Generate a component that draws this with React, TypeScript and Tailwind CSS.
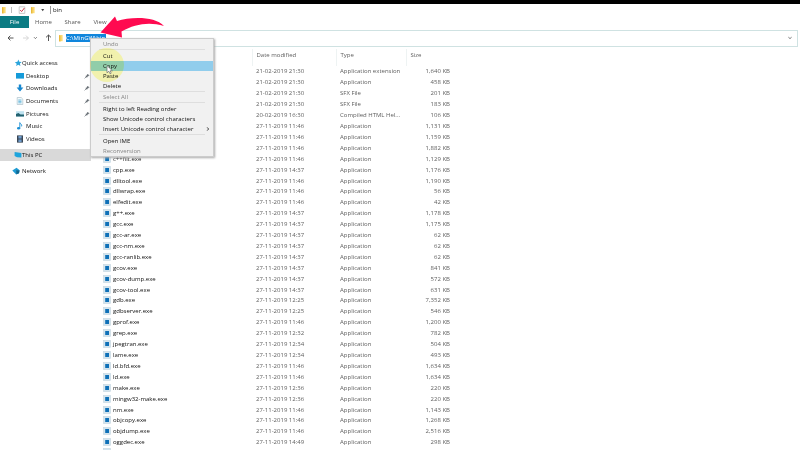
import React from "react";

type FileRow = [name: string, date: string, type: string, size: string];

const files: FileRow[] = [
  ["", "21-02-2019 21:30", "Application extension", "1,640 KB"],
  ["", "21-02-2019 21:30", "Application", "458 KB"],
  ["", "21-02-2019 21:30", "SFX File", "201 KB"],
  ["", "21-02-2019 21:30", "SFX File", "183 KB"],
  ["", "20-02-2019 16:30", "Compiled HTML Hel...", "106 KB"],
  ["", "27-11-2019 11:46", "Application", "1,131 KB"],
  ["", "27-11-2019 11:46", "Application", "1,159 KB"],
  ["", "27-11-2019 11:46", "Application", "1,882 KB"],
  ["c++filt.exe", "27-11-2019 11:46", "Application", "1,129 KB"],
  ["cpp.exe", "27-11-2019 14:37", "Application", "1,176 KB"],
  ["dlltool.exe", "27-11-2019 11:46", "Application", "1,190 KB"],
  ["dllwrap.exe", "27-11-2019 11:46", "Application", "56 KB"],
  ["elfedit.exe", "27-11-2019 11:46", "Application", "42 KB"],
  ["g++.exe", "27-11-2019 14:37", "Application", "1,178 KB"],
  ["gcc.exe", "27-11-2019 14:37", "Application", "1,175 KB"],
  ["gcc-ar.exe", "27-11-2019 14:37", "Application", "62 KB"],
  ["gcc-nm.exe", "27-11-2019 14:37", "Application", "62 KB"],
  ["gcc-ranlib.exe", "27-11-2019 14:37", "Application", "62 KB"],
  ["gcov.exe", "27-11-2019 14:37", "Application", "841 KB"],
  ["gcov-dump.exe", "27-11-2019 14:37", "Application", "572 KB"],
  ["gcov-tool.exe", "27-11-2019 14:37", "Application", "631 KB"],
  ["gdb.exe", "27-11-2019 12:25", "Application", "7,352 KB"],
  ["gdbserver.exe", "27-11-2019 12:25", "Application", "546 KB"],
  ["gprof.exe", "27-11-2019 11:46", "Application", "1,200 KB"],
  ["grep.exe", "27-11-2019 12:32", "Application", "782 KB"],
  ["jpegtran.exe", "27-11-2019 12:34", "Application", "504 KB"],
  ["lame.exe", "27-11-2019 12:34", "Application", "493 KB"],
  ["ld.bfd.exe", "27-11-2019 11:46", "Application", "1,634 KB"],
  ["ld.exe", "27-11-2019 11:46", "Application", "1,634 KB"],
  ["make.exe", "27-11-2019 12:36", "Application", "220 KB"],
  ["mingw32-make.exe", "27-11-2019 12:36", "Application", "220 KB"],
  ["nm.exe", "27-11-2019 11:46", "Application", "1,143 KB"],
  ["objcopy.exe", "27-11-2019 11:46", "Application", "1,268 KB"],
  ["objdump.exe", "27-11-2019 11:46", "Application", "2,516 KB"],
  ["oggdec.exe", "27-11-2019 14:49", "Application", "298 KB"],
  ["", "", "", ""],
];

function ExeIcon() {
  return (
    <svg viewBox="0 0 8 8" className="size-2 shrink-0">
      <rect x="0.5" y="0.5" width="7" height="7" fill="#d3e4ee" stroke="#c4d6e0" strokeWidth="0.6" />
      <rect x="2.2" y="2" width="3.8" height="4" fill="#0f70b7" />
    </svg>
  );
}

function Folder() {
  return (
    <svg viewBox="0 0 6 8" className="h-2 w-1.5 shrink-0">
      <path d="M1 1h3.6v6.2H1z" fill="#fbd970" />
      <path d="M1 1l1.4.8v6L1 7.2z" fill="#e9b93c" />
    </svg>
  );
}

function Chevron({ className }: { className: string }) {
  return (
    <svg viewBox="0 0 6 6" className={className} fill="none" stroke="currentColor">
      <path d="M1.4 2.2L3 3.6l1.6-1.400" strokeWidth=".8" />
    </svg>
  );
}

function PlaceIcon({ name }: { name: string }) {
  return (
    <svg viewBox="0 0 8 8" className="size-2 shrink-0">
      {name === "Quick access" && (
        <path d="M4.4.6l.9 2.2 2.4.2-1.8 1.6.5 2.5-2.1-1.3-2.2 1.3.6-2.3L.8 3.3l2.6-.5z" fill="#2ba5dc" />
      )}
      {name === "Desktop" && <path d="M0 1h8v5.6H0z" fill="#159bd9" />}
      {name === "Downloads" && <path d="M2.8.6h2.4v3H7.4L4 7.4.6 3.6h2.2z" fill="#1787cf" />}
      {name === "Documents" && (
        <>
          <path d="M1.2.5h4l1.6 1.6v5.4H1.2z" fill="#f4fafc" stroke="#9fb7c2" strokeWidth=".6" />
          <path d="M2.3 3h3.2M2.3 4.4h3.2M2.3 5.8h3.2" stroke="#3aa0d0" strokeWidth=".7" />
        </>
      )}
      {name === "Pictures" && (
        <>
          <path d="M0 1.2h8v5.4H0z" fill="#bfe3f1" />
          <path d="M0 6.6V4l2.4-1 2.2 1.4L8 4.6v2z" fill="#23616f" />
        </>
      )}
      {name === "Music" && (
        <>
          <ellipse cx="2.6" cy="6.2" rx="1.6" ry="1.3" fill="#1c8fd4" />
          <path d="M3.8 6.2V.6c.3 1.4 2.6 1.6 1.8 3.8" fill="none" stroke="#1c8fd4" strokeWidth=".9" />
        </>
      )}
      {name === "Videos" && (
        <>
          <path d="M1 .4h6v7.2H1z" fill="#3a4654" />
          <path d="M2.4 1h3.2v2.6H2.4zM2.4 4.4h3.2V7H2.4z" fill="#6f9ccb" />
        </>
      )}
      {name === "This PC" && <path d="M.6 1l6.8 1v4.6L3 6.2.6 5z" fill="#1da4dc" />}
      {name === "Network" && (
        <>
          <path d="M.3 3.4L4.6.8l3 2.4-.6 3-2.8 1.2z" fill="#1f9bd3" />
          <path d="M4.2 3.2l3.4.2-.6 2.8-2.6 1z" fill="#12668f" />
        </>
      )}
    </svg>
  );
}

function Pin() {
  return (
    <svg viewBox="0 0 6 6" className="mr-px ml-auto size-1.5" stroke="#626a70" fill="#626a70">
      <path d="M.6 5.4l1.8-1.8" strokeWidth=".7" />
      <path d="M3.600 1l1.600 1.600-1.400.5-.8 1.400L1.600 3.200l1.400-.8z" strokeWidth=".3" />
    </svg>
  );
}

const pinned = ["Desktop", "Downloads", "Documents", "Pictures"];
const places = [...pinned, "Music", "Videos"];

function Place({ name, className }: { name: string; className: string }) {
  return (
    <a href="#" className={`flex items-center ${className}`}>
      <PlaceIcon name={name} />
      {name}
      {pinned.includes(name) && <Pin />}
    </a>
  );
}

function MenuItem({ label, state = "" }: { label: string; state?: "off" | "hot" | "" }) {
  return (
    <button
      type="button"
      role="menuitem"
      disabled={state === "off"}
      className={`flex h-2.5 w-full items-center justify-between pr-0.5 pl-3 text-left ${
        state === "off" ? "text-[#858585]" : state === "hot" ? "bg-[#91cdec]" : ""
      }`}
    >
      {label}
      {label.startsWith("Insert") && <Chevron className="size-1.5 -rotate-90" />}
    </button>
  );
}

function Divider({ tight = false }: { tight?: boolean }) {
  return <div role="separator" className={`mx-2 border-t border-[#dedede] ${tight ? "" : "mb-px"}`} />;
}

export default function App() {
  return (
    <div className="relative flex h-screen flex-col overflow-hidden bg-white font-['Open_Sans','Noto_Sans',sans-serif] text-[6px] leading-[10px] text-[#111]">
      <div className="h-1 shrink-0 bg-black" />
      <header className="flex h-3 shrink-0 items-center gap-1 pl-px">
        <Folder />
        <span className="h-1.5 w-px bg-[#bbb]" />
        <svg viewBox="0 0 8 8" className="ml-0.5 size-2" fill="none">
          <path d="M1.2.8h5.6v6.6H1.2z" stroke="#b5b5b5" strokeWidth=".7" />
          <path d="M2.2 4l1.4 1.6L6.4 2" stroke="#d13b4c" />
        </svg>
        <Folder />
        <svg viewBox="0 0 6 6" className="size-1.5">
          <path d="M1.200 2h3L2.700 4.200z" fill="#444" />
        </svg>
        <span className="h-2 w-px bg-[#999]" />
        <span className="-ml-0.5">bin</span>
      </header>
      <nav className="flex h-3 shrink-0 items-center text-[#555]">
        <button type="button" className="h-3 w-[29px] bg-[#0b7b83] text-white">File</button>
        <button type="button" className="w-[29px]">Home</button>
        <button type="button" className="w-[29px]">Share</button>
        <button type="button" className="w-[26px]">View</button>
      </nav>
      <div className="mt-px flex h-[18px] shrink-0 items-center pr-0.5 text-[#555]">
        <div className="flex w-[55px] shrink-0 items-center pl-2">
          <svg viewBox="0 0 44 8" className="h-2 w-11" fill="none" stroke="currentColor">
            <path d="M5.5 4H0M2.4 1.6L0 4l2.4 2.4" />
            <path d="M15 4h5.5M18 1.6L20.4 4 18 6.4" stroke="#d6d6d6" />
            <path d="M26 3.200l1.400 1.400 1.400-1.400" strokeWidth=".8" />
            <path d="M40.500 7V1M38 3.400L40.500 1 43 3.400" />
          </svg>
        </div>
        <div className="flex h-[17px] flex-1 items-center border border-[#cfe2e2] pr-1 pl-0.5">
          <Folder />
          <input
            aria-label="Address"
            readOnly
            value="C:\MinGW\bin"
            className="ml-0.5 h-2 w-10 bg-[#0f86dc] text-white outline-none"
          />
          <Chevron className="ml-auto size-1.5" />
        </div>
      </div>
      <div className="flex min-h-0 flex-1 pt-[2px]">
        <aside className="w-[91px] shrink-0 pt-2">
          <div className="flex h-[88px] flex-col">
            <Place name="Quick access" className="flex-1 pl-3.5" />
            {places.map((p) => (
              <Place key={p} name={p} className="flex-1 gap-0.5 pl-4" />
            ))}
          </div>
          <Place name="This PC" className="mt-1 h-3 bg-[#d9d9d9] pl-3.5" />
          <Place name="Network" className="mt-1 h-3 gap-0.5 pl-3" />
        </aside>
        <main className="min-w-0 flex-1 pl-3">
          <table className="h-[408px] table-fixed border-collapse text-left whitespace-nowrap text-[#606060]">
            <thead>
              <tr className="h-[17px] align-top leading-[12px]">
                <th className="w-[149px] border-r border-[#eef3f3] p-0"></th>
                <th className="w-[84px] border-r border-[#eef3f3] p-0 pl-1 font-normal">Date modified</th>
                <th className="w-[70px] border-r border-[#eef3f3] p-0 pl-1 font-normal">Type</th>
                <th className="w-[44px] p-0 pl-1 font-normal">Size</th>
              </tr>
            </thead>
            <tbody>
              {files.map(([name, date, type, size], i) => (
                <tr key={i}>
                  <td className="p-0">
                    <div className="flex items-center gap-0.5 text-[#111]">
                      <ExeIcon />
                      {name}
                    </div>
                  </td>
                  <td className="p-0 pl-1">{date}</td>
                  <td className="p-0 pl-1">{type}</td>
                  <td className="p-0 text-right">{size}</td>
                </tr>
              ))}
            </tbody>
          </table>
        </main>
      </div>

      <div role="menu" className="absolute top-[38px] left-[90px] w-[124px] border border-[#cccccc] bg-[#f1f1f1] shadow-[1px_1px_2px_#aaa]">
        <MenuItem label="Undo" state="off" />
        <Divider />
        <MenuItem label="Cut" />
        <MenuItem label="Copy" state="hot" />
        <MenuItem label="Paste" />
        <MenuItem label="Delete" />
        <Divider tight />
        <MenuItem label="Select All" state="off" />
        <Divider />
        <MenuItem label="Right to left Reading order" />
        <MenuItem label="Show Unicode control characters" />
        <MenuItem label="Insert Unicode control character" />
        <Divider />
        <MenuItem label="Open IME" />
        <MenuItem label="Reconversion" state="off" />
      </div>
      <div className="absolute top-[48px] left-[90px] size-[34px] rounded-full bg-[#ffff60]/45 mix-blend-multiply" />
      <svg viewBox="0 0 8 10" className="absolute top-[65px] left-[106px] h-2.5 w-2">
        <path d="M1 .6v7.2l1.8-1.600 1.200 2.600 1.200-.6-1.100-2.400h2.300z" fill="#fff" stroke="#555" strokeWidth=".6" />
      </svg>
      <svg viewBox="0 0 66 24" className="absolute top-[14px] left-[99px] h-6 w-[66px]">
        <path d="M1.500 18.500L16 2.500l2 4.500C32 2.500 56 2 65 12 50 7.500 36 10 22.500 17.500l.5 6z" fill="#ff0a50" />
      </svg>
    </div>
  );
}
